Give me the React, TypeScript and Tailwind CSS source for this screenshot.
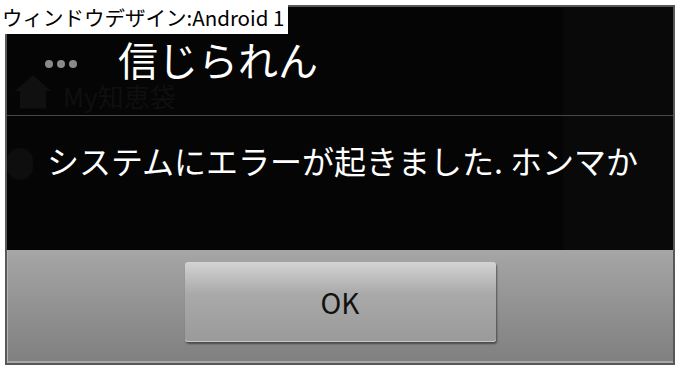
export default function App() {
  return (
    <div className="relative w-[680px] h-[368px] bg-white font-['Noto_Sans_CJK_JP','Noto_Sans',sans-serif] overflow-hidden">
      {/* caption tag sitting over the dialog corner */}
      <div className="absolute left-0 top-0 z-10 h-[34px] bg-white pl-[2px] pr-[4px] text-[20.5px] leading-[34px] text-black">
        ウィンドウデザイン:Android 1
      </div>

      <div className="pl-[5px] pt-[5px]">
        <div className="flex h-[360px] w-[670px] flex-col border-2 border-[#585858] bg-[#050505]">
          {/* title */}
          <div className="relative flex h-[109px] border-b border-[#474747]">
            <div className="absolute left-[6px] top-[66px] flex items-end gap-[10px] text-[#0f0f0f]">
              <svg width="40" height="36" viewBox="0 0 46 40" fill="#101010">
                <path d="M23 2 L44 20 L38 20 L38 40 L8 40 L8 20 L2 20 Z" />
              </svg>
              <span className="text-[26px] leading-[26px]">My知恵袋</span>
            </div>
            <div className="absolute right-0 top-0 h-full w-[110px] bg-[#090909]" />
            <div className="relative ml-[38px] mt-[53px] flex h-[8px] gap-[4px]">
              <span className="h-[8px] w-[8px] rounded-full bg-[#8a8a8a]" />
              <span className="h-[8px] w-[8px] rounded-full bg-[#8a8a8a]" />
              <span className="h-[8px] w-[8px] rounded-full bg-[#8a8a8a]" />
            </div>
            <div className="relative ml-[41px] mt-[32px] h-[40px] text-[40px] leading-none text-white">信じられん</div>
          </div>

          {/* message */}
          <div className="relative flex-1 pl-[40px] pt-[28px]">
            <div className="absolute left-0 top-[32px] h-[32px] w-[26px] rounded-full bg-[#0e0e0e]" />
            <div className="absolute right-0 top-0 h-full w-[110px] bg-[#090909]" />
            <div className="relative text-[32px] leading-none whitespace-nowrap text-white">
              システムにエラーが起きました. ホンマか
            </div>
          </div>

          {/* button bar */}
          <div className="flex h-[113px] justify-center bg-gradient-to-b from-[#a6a6a6] to-[#7f7f7f] pt-[12px] shadow-[inset_1px_0_0_#b4b4b4,inset_0_-2px_0_#a8a8a8]">
            <button
              type="button"
              className="h-[80px] w-[311px] rounded-[3px] bg-[linear-gradient(to_bottom,#d3d3d3_0%,#a9a9a9_40%,#9a9a9a_100%)] text-[28px] leading-none text-[#111] shadow-[1px_2px_2px_rgba(0,0,0,0.45),inset_0_-1px_0_#c8c8c8]"
            >
              OK
            </button>
          </div>
        </div>
      </div>
    </div>
  );
}
